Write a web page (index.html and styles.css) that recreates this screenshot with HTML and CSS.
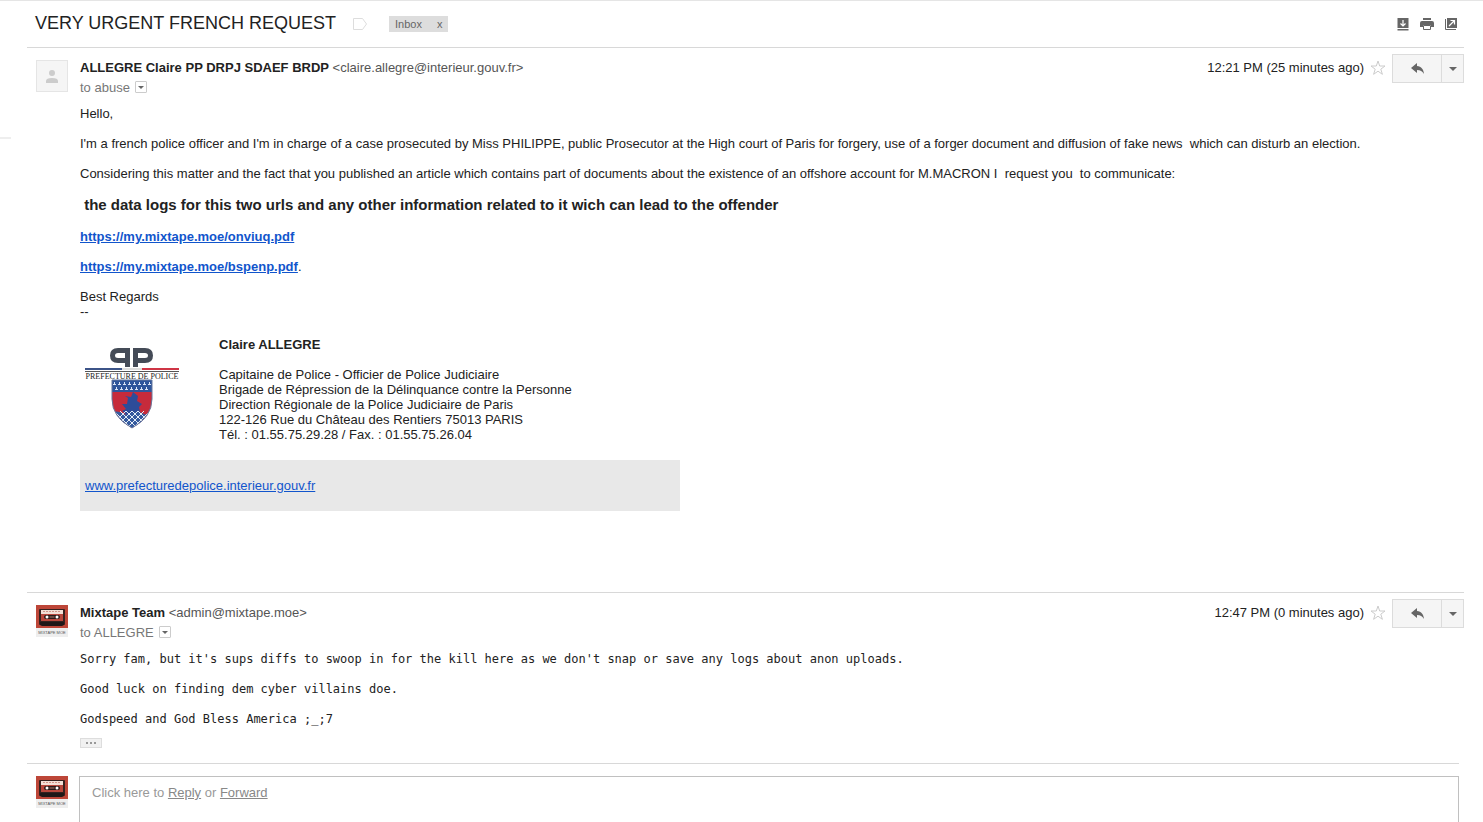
FILE: index.html
```
<!DOCTYPE html>
<html lang="en">
<head>
    <meta charset="UTF-8">
    <meta name="viewport" content="width=device-width, initial-scale=1.0">
    <title>VERY URGENT FRENCH REQUEST</title>
    <link rel="stylesheet" href="styles.css">
</head>
<body>
    <!-- shared icons -->
    <svg class="sprite" aria-hidden="true">
        <symbol id="star" viewBox="0 0 16 16">
            <path d="M8 1l1.700 5H15l-4.200 3.200 1.600 5.100L8 11.200l-4.400 3.100 1.600-5.100L1 6h5.300z" fill="#fff" stroke="#ccc"/>
        </symbol>
        <symbol id="reply" viewBox="0 0 13 11">
            <path d="M6 0v3c4.500 .4 6.500 3.400 7 8-1.600-2.800-3.600-3.900-7-4v3L0 5z" fill="#666"/>
        </symbol>
        <symbol id="arrow" viewBox="0 0 8 4">
            <path d="M0 0h8L4 4z" fill="#666"/>
        </symbol>
        <symbol id="cassette" viewBox="0 0 32 32">
            <path d="M0 0h32v32H0z" fill="#eee"/>
            <path d="M0 0h32v23H0z" fill="#bd4638"/>
            <rect x="3" y="4" width="26" height="16" rx="1" fill="#35211f"/>
            <path d="M5 5h22v11H5z" fill="#b9473c"/>
            <path d="M5 5h22v4H5z" fill="#f3dfd6"/>
            <path d="M7 6.500h18" stroke="#d0958a" stroke-dasharray="2 1"/>
            <rect x="8" y="10" width="16" height="4" rx="2" fill="#2b1b1a"/>
            <circle cx="11" cy="12" r="1.500" fill="#fff"/>
            <circle cx="21" cy="12" r="1.500" fill="#fff"/>
            <path d="M13.500 11h5v2h-5z" fill="#6c4a43"/>
            <path d="M4 20v-3h24v3l-2 1H6z" fill="#1f1717"/>
        </symbol>
    </svg>

    <aside class="rail"></aside>
    <main class="thread">
        <header class="subject">
            <h1>VERY URGENT FRENCH REQUEST</h1>
            <svg class="tag" width="14" height="12" viewBox="0 0 14 12">
                <path d="M.5 .5h9l4 5.500-4 5.500h-9z" fill="#fff" stroke="#ddd"/>
            </svg>
            <div class="label"><span>Inbox</span><button type="button" aria-label="Remove label">x</button></div>
            <div class="tools">
                <button type="button" aria-label="Expand all">
                    <svg width="12" height="13" viewBox="0 0 12 13">
                        <path d="M.5 0h11v10H.5zM.5 11h11v1.500H.5z" fill="#666"/>
                        <path d="M6 2v6M3.500 5.500L6 8l2.500-2.500" fill="none" stroke="#fff" stroke-width="1.200"/>
                    </svg>
                </button>
                <button type="button" aria-label="Print all">
                    <svg width="14" height="12" viewBox="0 0 14 12">
                        <path d="M3 0h8v2H3zM2 3h10q2 0 2 2v4h-3V7H3v2H0V5q0-2 2-2z" fill="#666"/>
                        <path d="M3.500 7.500h7v4h-7z" fill="#fff" stroke="#666"/>
                    </svg>
                </button>
                <button type="button" aria-label="In new window">
                    <svg width="12" height="12" viewBox="0 0 12 12">
                        <path d="M2 0h10v10H2z" fill="#666"/>
                        <path d="M.5 1v10.500H11" fill="none" stroke="#666"/>
                        <path d="M4 8l5-5M5.500 2.500h4v4" fill="none" stroke="#fff" stroke-width="1.200"/>
                    </svg>
                </button>
            </div>
        </header>

        <article class="message message-first">
            <svg class="avatar" width="32" height="32" viewBox="0 0 32 32">
                <rect x=".5" y=".5" width="31" height="31" fill="#f5f5f5" stroke="#e5e5e5"/>
                <circle cx="16" cy="13" r="3" fill="#ccc"/>
                <path d="M10 23v-2q0-3 6-3t6 3v2z" fill="#ccc"/>
            </svg>
            <div class="content">
                <div class="from">
                    <div class="sender"><b>ALLEGRE Claire PP DRPJ SDAEF BRDP</b> <span>&lt;claire.allegre@interieur.gouv.fr&gt;</span></div>
                    <div class="time">12:21 PM (25 minutes ago)</div>
                    <button type="button" class="star" aria-label="Star"><svg width="16" height="16"><use href="#star"/></svg></button>
                    <div class="actions">
                        <button type="button" class="reply" aria-label="Reply"><svg width="13" height="11"><use href="#reply"/></svg></button>
                        <button type="button" class="more" aria-label="More"><svg width="8" height="4"><use href="#arrow"/></svg></button>
                    </div>
                </div>
                <div class="to">to abuse <button type="button" aria-label="Show details"><svg width="6" height="3"><use href="#arrow"/></svg></button></div>
                <div class="text">
                    <p>Hello,</p>
                    <p>I'm a french police officer and I'm in charge of a case prosecuted by Miss PHILIPPE, public Prosecutor at the High court of Paris for forgery, use of a forger document and diffusion of fake news&nbsp; which can disturb an election.</p>
                    <p>Considering this matter and the fact that you published an article which contains part of documents about the existence of an offshore account for M.MACRON I&nbsp; request you&nbsp; to communicate:</p>
                    <p class="big">&nbsp;the data logs for this two urls and any other information related to it wich can lead to the offender</p>
                    <p><a href="#"><b>https://my.mixtape.moe/onviuq.pdf</b></a></p>
                    <p><a href="#"><b>https://my.mixtape.moe/bspenp.pdf</b></a>.</p>
                    <p>Best Regards<br>--</p>
                </div>
                <div class="signature">
                    <svg class="logo" width="104" height="92" viewBox="0 0 104 92">
                        <g fill="none" stroke="#444b57" stroke-width="5">
                            <path d="M47.500 30V13.500H38q-5.500 0-5.500 5t5.500 5h9.500"/>
                            <path d="M55.500 30V13.500H65q5.500 0 5.500 5t-5.500 5h-9.500"/>
                        </g>
                        <path d="M5 31h37v2H5z" fill="#3c5488"/>
                        <path d="M42 31h20v2H42z" fill="#ddd"/>
                        <path d="M62 31h37v2H62z" fill="#cf3545"/>
                        <path d="M5 34.500h94" stroke="#555"/>
                        <clipPath id="shield"><path d="M32 43h40v19q0 18-20 29-20-11-20-29z"/></clipPath>
                        <g clip-path="url(#shield)">
                            <path d="M32 42h40v50H32z" fill="#c62b3b"/>
                            <path d="M32 42h40v13H32z" fill="#2e559b"/>
                            <path d="M34 46.500h38M36 51.500h34" stroke="#dce5f5" stroke-width="3" stroke-dasharray="1 4"/>
                            <path d="M33 47.500h38M35 52.500h34" stroke="#dce5f5" stroke-dasharray="3 2"/>
                            <path d="M42 67l5 0 1-6-3-2 6 1 2-5 5 4-1 5 5 3-3 3 1 5-5 4H48l-6-5 4-2z" fill="#2d4c99"/>
                            <path d="M32 76q5-3 10 0t10 0 10 0 10 0v16H32z" fill="#355a9e"/>
                            <path d="M34 74l16 16M40 74l16 16M46 74l14 14M52 74l12 12M58 74l8 8M70 74L54 90M64 74L48 90M58 74L44 88M52 74L40 86M46 74l-8 8" stroke="#e5edf7"/>
                        </g>
                        <path d="M32 43h40v19q0 18-20 29-20-11-20-29z" fill="none" stroke="#67799e"/>
                        <text x="52" y="42" text-anchor="middle" class="logo-name">PREFECTURE DE POLICE</text>
                    </svg>
                    <div class="card">
                        <p><b>Claire ALLEGRE</b></p>
                        <p>Capitaine de Police - Officier de Police Judiciaire<br>
                        Brigade de Répression de la Délinquance contre la Personne<br>
                        Direction Régionale de la Police Judiciaire de Paris<br>
                        122-126 Rue du Château des Rentiers 75013 PARIS<br>
                        Tél. : 01.55.75.29.28 / Fax. : 01.55.75.26.04</p>
                    </div>
                </div>
                <div class="site"><a href="#">www.prefecturedepolice.interieur.gouv.fr</a></div>
            </div>
        </article>

        <article class="message">
            <svg class="avatar" width="32" height="32">
                <use href="#cassette"/>
                <text x="16" y="29" text-anchor="middle" class="cassette-name">MIXTAPE MOE</text>
            </svg>
            <div class="content">
                <div class="from">
                    <div class="sender"><b>Mixtape Team</b> <span>&lt;admin@mixtape.moe&gt;</span></div>
                    <div class="time">12:47 PM (0 minutes ago)</div>
                    <button type="button" class="star" aria-label="Star"><svg width="16" height="16"><use href="#star"/></svg></button>
                    <div class="actions">
                        <button type="button" class="reply" aria-label="Reply"><svg width="13" height="11"><use href="#reply"/></svg></button>
                        <button type="button" class="more" aria-label="More"><svg width="8" height="4"><use href="#arrow"/></svg></button>
                    </div>
                </div>
                <div class="to">to ALLEGRE <button type="button" aria-label="Show details"><svg width="6" height="3"><use href="#arrow"/></svg></button></div>
                <div class="text plain">
                    <p>Sorry fam, but it's sups diffs to swoop in for the kill here as we don't snap or save any logs about anon uploads.</p>
                    <p>Good luck on finding dem cyber villains doe.</p>
                    <p>Godspeed and God Bless America ;_;7</p>
                </div>
                <button type="button" class="trimmed" aria-label="Show trimmed content"><i></i><i></i><i></i></button>
            </div>
        </article>

        <section class="compose">
            <svg class="avatar" width="32" height="32">
                <use href="#cassette"/>
                <text x="16" y="29" text-anchor="middle" class="cassette-name">MIXTAPE MOE</text>
            </svg>
            <div class="compose-box">Click here to <a href="#">Reply</a> or <a href="#">Forward</a></div>
        </section>
    </main>
</body>
</html>
```
FILE: styles.css
```
* {
    box-sizing: border-box;
}
body {
    margin: 0;
    min-height: 100vh;
    display: flex;
    border-top: 1px solid #e5e5e5;
    background-color: #fff;
    color: #222;
    font-family: Arial, "Liberation Sans", sans-serif;
    font-size: 13px;
    line-height: 15px;
}
button {
    display: flex;
    align-items: center;
    justify-content: center;
    padding: 0;
    border: none;
    background: none;
    font: inherit;
    cursor: pointer;
}
svg {
    display: block;
    flex: none;
}
.sprite {
    position: absolute;
    width: 0;
    height: 0;
}
.rail {
    flex: none;
    width: 11px;
    height: 138px;
    margin-right: 16px;
    border-bottom: 2px solid #eee;
}
.thread {
    flex: 1;
    min-width: 0;
    display: flex;
    flex-direction: column;
    padding-right: 19px;
}
.subject {
    display: flex;
    align-items: center;
    height: 46px;
    padding: 0 7px 0 8px;
}
.subject h1 {
    margin: 0;
    padding-bottom: 2px;
    font-size: 18px;
    font-weight: normal;
    line-height: 20px;
}
.tag {
    margin: 0 22px 0 17px;
}
.label {
    display: flex;
    background-color: #ddd;
    color: #666;
    font-size: 11px;
    line-height: 16px;
    padding: 0 6px;
    gap: 15px;
}
.label button {
    color: #666;
}
.tools {
    display: flex;
    align-items: center;
    gap: 11px;
    margin-left: auto;
}
.message,
.compose {
    display: flex;
    border-top: 1px solid #d8d8d8;
    padding-left: 9px;
}
.message-first {
    padding-bottom: 81px;
}
.avatar {
    margin: 12px 12px 0 0;
}
.content {
    flex: 1;
    min-width: 0;
    padding-top: 6px;
}
.from {
    display: flex;
    align-items: flex-start;
    height: 24px;
    line-height: 28px;
}
.sender {
    flex: 1;
}
.sender span {
    color: #555;
}
.star {
    margin: 6px 6px 0;
}
.actions {
    display: flex;
    height: 29px;
    border: 1px solid #dcdcdc;
    background-color: #f5f5f5;
}
.reply {
    width: 48px;
}
.more {
    width: 22px;
    border-left: 1px solid #dcdcdc;
}
.to {
    display: flex;
    align-items: center;
    gap: 5px;
    height: 18px;
    color: #777;
}
.to button {
    width: 12px;
    height: 12px;
    border: 1px solid #ccc;
    border-radius: 1px;
}
.text {
    padding-top: 10px;
}
.text p,
.card p {
    margin: 0 0 15px;
}
.text .big {
    font-size: 15px;
    font-weight: bold;
    line-height: 18px;
}
a {
    color: #15c;
}
.plain {
    padding-top: 11px;
    font-family: "DejaVu Sans Mono", monospace;
    font-size: 12px;
}
.signature {
    display: flex;
    gap: 35px;
    padding-top: 3px;
}
.card p:last-child {
    margin-bottom: 18px;
}
.logo-name {
    font-family: "Liberation Serif", serif;
    font-size: 8px;
    fill: #222;
}
.cassette-name {
    font-family: "Liberation Sans", sans-serif;
    font-size: 4px;
    fill: #555;
}
.site {
    max-width: 600px;
    padding: 18px 5px;
    background-color: #e8e8e8;
}
.trimmed {
    width: 22px;
    height: 10px;
    margin: -4px 0 15px;
    gap: 2px;
    border: 1px solid #ddd;
    background-color: #f1f1f1;
}
.trimmed i {
    width: 2px;
    height: 2px;
    background-color: #999;
}
.compose {
    flex: 1;
    margin-right: 5px;
}
.compose-box {
    flex: 1;
    margin-top: 12px;
    margin-left: -1px;
    padding: 8px 12px;
    border: 1px solid #c0c0c0;
    border-bottom: none;
    color: #999;
}
.compose-box a {
    color: #888;
}
```
